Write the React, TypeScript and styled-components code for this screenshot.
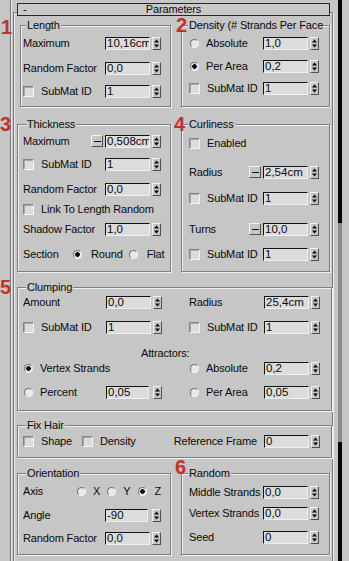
import React from "react";
import styled, { createGlobalStyle } from "styled-components";

const BG = "#c6c6c6";
const RED = "#c3302c";

const GlobalStyle = createGlobalStyle`
  html, body { margin: 0; padding: 0; background: ${BG}; }
  body {
    font-family: "Liberation Sans", Arial, sans-serif;
    font-size: 11px;
    letter-spacing: -0.15px;
    color: #0a0a0a;
  }
  * { box-sizing: border-box; }
`;

const Page = styled.div`
  display: flex;
  width: 349px;
  height: 561px;
  overflow: hidden;
  background: ${BG};
`;

const Panel = styled.div`
  flex: none;
  width: 327px;
  margin-left: 10px;
  padding-left: 2px;
  border-left: 1px solid #777;
  box-shadow: inset 1px 0 0 #ededed;
`;

const Scrollbar = styled.div`
  flex: none;
  width: 4px;
  margin-left: 1px;
  display: flex;
  flex-direction: column;
`;

const ScrollSeg = styled.div<{ $h?: number; $dark?: boolean }>`
  flex: ${(p) => (p.$h ? `0 0 ${p.$h}px` : "1 1 auto")};
  background: ${(p) => (p.$dark ? "#060606" : "#8b8b8b")};
`;

const Rollout = styled.div`
  width: 320px;
  margin-top: 12px;
  padding-bottom: 40px;
  border: 1px solid #7a7a7a;
  box-shadow: inset 1px 1px 0 #ededed, 1px 1px 0 #ededed;
`;

const Header = styled.div`
  display: grid;
  grid-template-columns: 1fr auto 1fr;
  align-items: center;
  height: 13px;
  margin: -10px 2px 0 3px;
  padding: 0 5px;
  border: 1px solid #262626;
  background: #c9c9c9;
  line-height: 11px;
`;

const Pair = styled.div<{ $mt: number }>`
  display: grid;
  grid-template-columns: 154px 149px;
  column-gap: 10px;
  margin: ${(p) => p.$mt}px 0 0 3px;
`;

const GroupBox = styled.div<{ $ml?: number; $mt?: number; $pb: number }>`
  position: relative;
  display: flex;
  flex-direction: column;
  margin: ${(p) => p.$mt ?? 0}px 0 0 ${(p) => p.$ml ?? 0}px;
  padding-bottom: ${(p) => p.$pb}px;
  border: 1px solid #7e7e7e;
  box-shadow: inset 1px 1px 0 #efefef, 1px 1px 0 #efefef;
`;

const Title = styled.div<{ $ml: number }>`
  align-self: flex-start;
  height: 13px;
  line-height: 13px;
  margin: -7px 0 0 ${(p) => p.$ml}px;
  padding: 0 1px;
  background: ${BG};
  white-space: nowrap;
`;

const Badge = styled.span<{ $x: number; $y: number }>`
  position: absolute;
  left: ${(p) => p.$x}px;
  top: ${(p) => p.$y}px;
  font: bold 20px/20px "Liberation Sans", Arial, sans-serif;
  letter-spacing: 0;
  color: ${RED};
  pointer-events: none;
`;

const Body = styled.div<{ $pl: number; $pr: number }>`
  display: flex;
  flex-direction: column;
  padding: 0 ${(p) => p.$pr}px 0 ${(p) => p.$pl}px;
`;

const Row = styled.div<{ $mt: number; $start?: boolean }>`
  display: flex;
  align-items: center;
  justify-content: ${(p) => (p.$start ? "flex-start" : "space-between")};
  height: 16px;
  margin-top: ${(p) => p.$mt}px;
`;

const Split = styled.div<{ $mt: number }>`
  display: grid;
  grid-template-columns: 153px 150px;
  column-gap: 10px;
  margin-top: ${(p) => p.$mt}px;
`;

const Cell = styled.div<{ $pl: number; $pr: number }>`
  display: flex;
  align-items: center;
  justify-content: space-between;
  height: 16px;
  padding: 0 ${(p) => p.$pr}px 0 ${(p) => p.$pl}px;
`;

const Caption = styled.div<{ $ml: number; $mt: number }>`
  height: 12px;
  line-height: 12px;
  margin: ${(p) => p.$mt}px 0 0 ${(p) => p.$ml}px;
`;

const Label = styled.span<{ $w?: number; $mr?: number }>`
  flex: none;
  width: ${(p) => (p.$w ? `${p.$w}px` : "auto")};
  margin-right: ${(p) => p.$mr ?? 0}px;
  line-height: 13px;
  white-space: nowrap;
`;

const Group = styled.span`
  display: flex;
  align-items: center;
  flex: none;
`;

const Spinner = styled.span`
  display: flex;
  align-items: center;
  flex: none;
`;

const MinusBtn = styled.span`
  display: flex;
  align-items: center;
  justify-content: center;
  width: 12px;
  height: 12px;
  margin-right: 2px;
  border: 1px solid;
  border-color: #f2f2f2 #4e4e4e #4e4e4e #f2f2f2;
  background: ${BG};
  &::before {
    content: "";
    width: 7px;
    height: 1px;
    background: #111;
  }
`;

const Field = styled.span<{ $w: number }>`
  display: block;
  width: ${(p) => p.$w}px;
  height: 13px;
  margin-right: ${(p) => 47 - p.$w}px;
  padding-left: 1px;
  border: 1px solid;
  border-color: #141414 #f0f0f0 #f0f0f0 #141414;
  background: #dcdcdc;
  font-size: 11.5px;
  letter-spacing: 0;
  line-height: 11px;
  overflow: hidden;
  white-space: nowrap;
`;

const ArrowBox = styled.span`
  display: block;
  width: 9px;
  height: 13px;
  border: 1px solid;
  border-color: #f2f2f2 #505050 #505050 #f2f2f2;
  background: ${BG};
  svg {
    display: block;
  }
`;

const CheckBox = styled.span`
  flex: none;
  width: 11px;
  height: 11px;
  margin-right: 7px;
  border: 1px solid;
  border-color: #848484 #f5f5f5 #f5f5f5 #848484;
  box-shadow: inset 1px 1px 0 #a8a8a8;
  background: #dcdcdc;
`;

const Option = styled.span<{ $mr?: number }>`
  display: flex;
  align-items: center;
  flex: none;
  margin-right: ${(p) => p.$mr ?? 0}px;
  line-height: 13px;
  white-space: nowrap;
`;

const RadioDot = styled.span<{ $on?: boolean; $gap?: number }>`
  flex: none;
  width: 9px;
  height: 9px;
  margin: 0 ${(p) => p.$gap ?? 7}px 0 1px;
  border-radius: 50%;
  border: 1px solid;
  border-color: #747474 #f4f4f4 #f4f4f4 #747474;
  background: ${(p) =>
    p.$on
      ? "radial-gradient(circle at 50% 50%, #000 0 2px, #e8e8e8 2.6px)"
      : "#e8e8e8"};
`;

function Arrows() {
  return (
    <ArrowBox>
      <svg width="7" height="11" viewBox="0 0 7 11">
        <polygon points="1,4.5 6,4.5 3.5,1.5" fill="#000" />
        <polygon points="1,6.5 6,6.5 3.5,9.5" fill="#000" />
      </svg>
    </ArrowBox>
  );
}

function Spin({ value, w = 45, minus }: { value: string; w?: number; minus?: boolean }) {
  return (
    <Spinner>
      {minus && <MinusBtn />}
      <Field $w={w}>{value}</Field>
      <Arrows />
    </Spinner>
  );
}

function Check({ children, mr }: { children: React.ReactNode; mr?: number }) {
  return (
    <Option $mr={mr}>
      <CheckBox />
      {children}
    </Option>
  );
}

function Radio({
  children,
  on,
  gap,
  mr,
}: {
  children: React.ReactNode;
  on?: boolean;
  gap?: number;
  mr?: number;
}) {
  return (
    <Option $mr={mr}>
      <RadioDot $on={on} $gap={gap} />
      {children}
    </Option>
  );
}

export default function App() {
  return (
    <>
      <GlobalStyle />
      <Page>
        <Panel>
          <Rollout>
            <Header>
              <span>-</span>
              <span>Parameters</span>
              <span />
            </Header>

            <Pair $mt={9}>
              <GroupBox $ml={3} $pb={7}>
                <Title $ml={5}>Length</Title>
                <Badge $x={-20} $y={-9}>1</Badge>
                <Body $pl={2} $pr={9}>
                  <Row $mt={3}>
                    <Label>Maximum</Label>
                    <Spin value="10,16cm" />
                  </Row>
                  <Row $mt={9}>
                    <Label>Random Factor</Label>
                    <Spin value="0,0" />
                  </Row>
                  <Row $mt={7}>
                    <Check>SubMat ID</Check>
                    <Spin value="1" />
                  </Row>
                </Body>
              </GroupBox>
              <GroupBox $pb={10}>
                <Title $ml={6}>Density (# Strands Per Face</Title>
                <Badge $x={-6} $y={-11}>2</Badge>
                <Body $pl={7} $pr={10}>
                  <Row $mt={3}>
                    <Radio>Absolute</Radio>
                    <Spin value="1,0" />
                  </Row>
                  <Row $mt={7}>
                    <Radio on>Per Area</Radio>
                    <Spin value="0,2" />
                  </Row>
                  <Row $mt={6}>
                    <Check>SubMat ID</Check>
                    <Spin value="1" />
                  </Row>
                </Body>
              </GroupBox>
            </Pair>

            <Pair $mt={17}>
              <GroupBox $pb={9}>
                <Title $ml={8}>Thickness</Title>
                <Badge $x={-18} $y={-11}>3</Badge>
                <Body $pl={5} $pr={9}>
                  <Row $mt={2}>
                    <Label>Maximum</Label>
                    <Spin value="0,508cm" minus />
                  </Row>
                  <Row $mt={7}>
                    <Check>SubMat ID</Check>
                    <Spin value="1" />
                  </Row>
                  <Row $mt={9}>
                    <Label>Random Factor</Label>
                    <Spin value="0,0" />
                  </Row>
                  <Row $mt={4}>
                    <Check>Link To Length Random</Check>
                  </Row>
                  <Row $mt={4}>
                    <Label>Shadow Factor</Label>
                    <Spin value="1,0" />
                  </Row>
                  <Row $mt={9} $start>
                    <Label $w={49}>Section</Label>
                    <Radio on gap={9} mr={5}>
                      Round
                    </Radio>
                    <Radio gap={9}>Flat</Radio>
                  </Row>
                </Body>
              </GroupBox>
              <GroupBox $pb={9}>
                <Title $ml={6}>Curliness</Title>
                <Badge $x={-8} $y={-11}>4</Badge>
                <Body $pl={7} $pr={10}>
                  <Row $mt={4}>
                    <Check>Enabled</Check>
                  </Row>
                  <Row $mt={13}>
                    <Label>Radius</Label>
                    <Spin value="2,54cm" minus />
                  </Row>
                  <Row $mt={10}>
                    <Check>SubMat ID</Check>
                    <Spin value="1" />
                  </Row>
                  <Row $mt={15}>
                    <Label>Turns</Label>
                    <Spin value="10,0" minus />
                  </Row>
                  <Row $mt={9}>
                    <Check>SubMat ID</Check>
                    <Spin value="1" />
                  </Row>
                </Body>
              </GroupBox>
            </Pair>

            <GroupBox $ml={3} $mt={15} $pb={10}>
              <Title $ml={8}>Clumping</Title>
              <Badge $x={-18} $y={-11}>5</Badge>
              <Body $pl={0} $pr={0}>
                <Split $mt={0}>
                  <Cell $pl={5} $pr={9}>
                    <Label>Amount</Label>
                    <Spin value="0,0" />
                  </Cell>
                  <Cell $pl={8} $pr={11}>
                    <Label>Radius</Label>
                    <Spin value="25,4cm" />
                  </Cell>
                </Split>
                <Split $mt={9}>
                  <Cell $pl={5} $pr={9}>
                    <Check>SubMat ID</Check>
                    <Spin value="1" />
                  </Cell>
                  <Cell $pl={8} $pr={11}>
                    <Check>SubMat ID</Check>
                    <Spin value="1" />
                  </Cell>
                </Split>
                <Caption $ml={123} $mt={12}>
                  Attractors:
                </Caption>
                <Split $mt={1}>
                  <Cell $pl={5} $pr={9}>
                    <Radio on>Vertex Strands</Radio>
                  </Cell>
                  <Cell $pl={8} $pr={11}>
                    <Radio>Absolute</Radio>
                    <Spin value="0,2" />
                  </Cell>
                </Split>
                <Split $mt={8}>
                  <Cell $pl={5} $pr={9}>
                    <Radio>Percent</Radio>
                    <Spin value="0,05" w={43} />
                  </Cell>
                  <Cell $pl={8} $pr={11}>
                    <Radio>Per Area</Radio>
                    <Spin value="0,05" />
                  </Cell>
                </Split>
              </Body>
            </GroupBox>

            <GroupBox $ml={3} $mt={14} $pb={8}>
              <Title $ml={8}>Fix Hair</Title>
              <Body $pl={5} $pr={11}>
                <Row $mt={1}>
                  <Group>
                    <Check mr={10}>Shape</Check>
                    <Check>Density</Check>
                  </Group>
                  <Group>
                    <Label $mr={7}>Reference Frame</Label>
                    <Spin value="0" />
                  </Group>
                </Row>
              </Body>
            </GroupBox>

            <Pair $mt={15}>
              <GroupBox $pb={8}>
                <Title $ml={8}>Orientation</Title>
                <Body $pl={5} $pr={9}>
                  <Row $mt={3} $start>
                    <Label $w={53}>Axis</Label>
                    <Radio mr={6}>X</Radio>
                    <Radio mr={7}>Y</Radio>
                    <Radio on>Z</Radio>
                  </Row>
                  <Row $mt={8}>
                    <Label>Angle</Label>
                    <Spin value="-90" w={43} />
                  </Row>
                  <Row $mt={7}>
                    <Label>Random Factor</Label>
                    <Spin value="0,0" />
                  </Row>
                </Body>
              </GroupBox>
              <GroupBox $pb={8}>
                <Title $ml={6}>Random</Title>
                <Badge $x={-7} $y={-17}>6</Badge>
                <Body $pl={7} $pr={10}>
                  <Row $mt={4}>
                    <Label>Middle Strands</Label>
                    <Spin value="0,0" />
                  </Row>
                  <Row $mt={5}>
                    <Label>Vertex Strands</Label>
                    <Spin value="0,0" />
                  </Row>
                  <Row $mt={8}>
                    <Label>Seed</Label>
                    <Spin value="0" />
                  </Row>
                </Body>
              </GroupBox>
            </Pair>
          </Rollout>
        </Panel>
        <Scrollbar>
          <ScrollSeg $dark $h={223} />
          <ScrollSeg $h={219} />
          <ScrollSeg $dark />
        </Scrollbar>
      </Page>
    </>
  );
}
